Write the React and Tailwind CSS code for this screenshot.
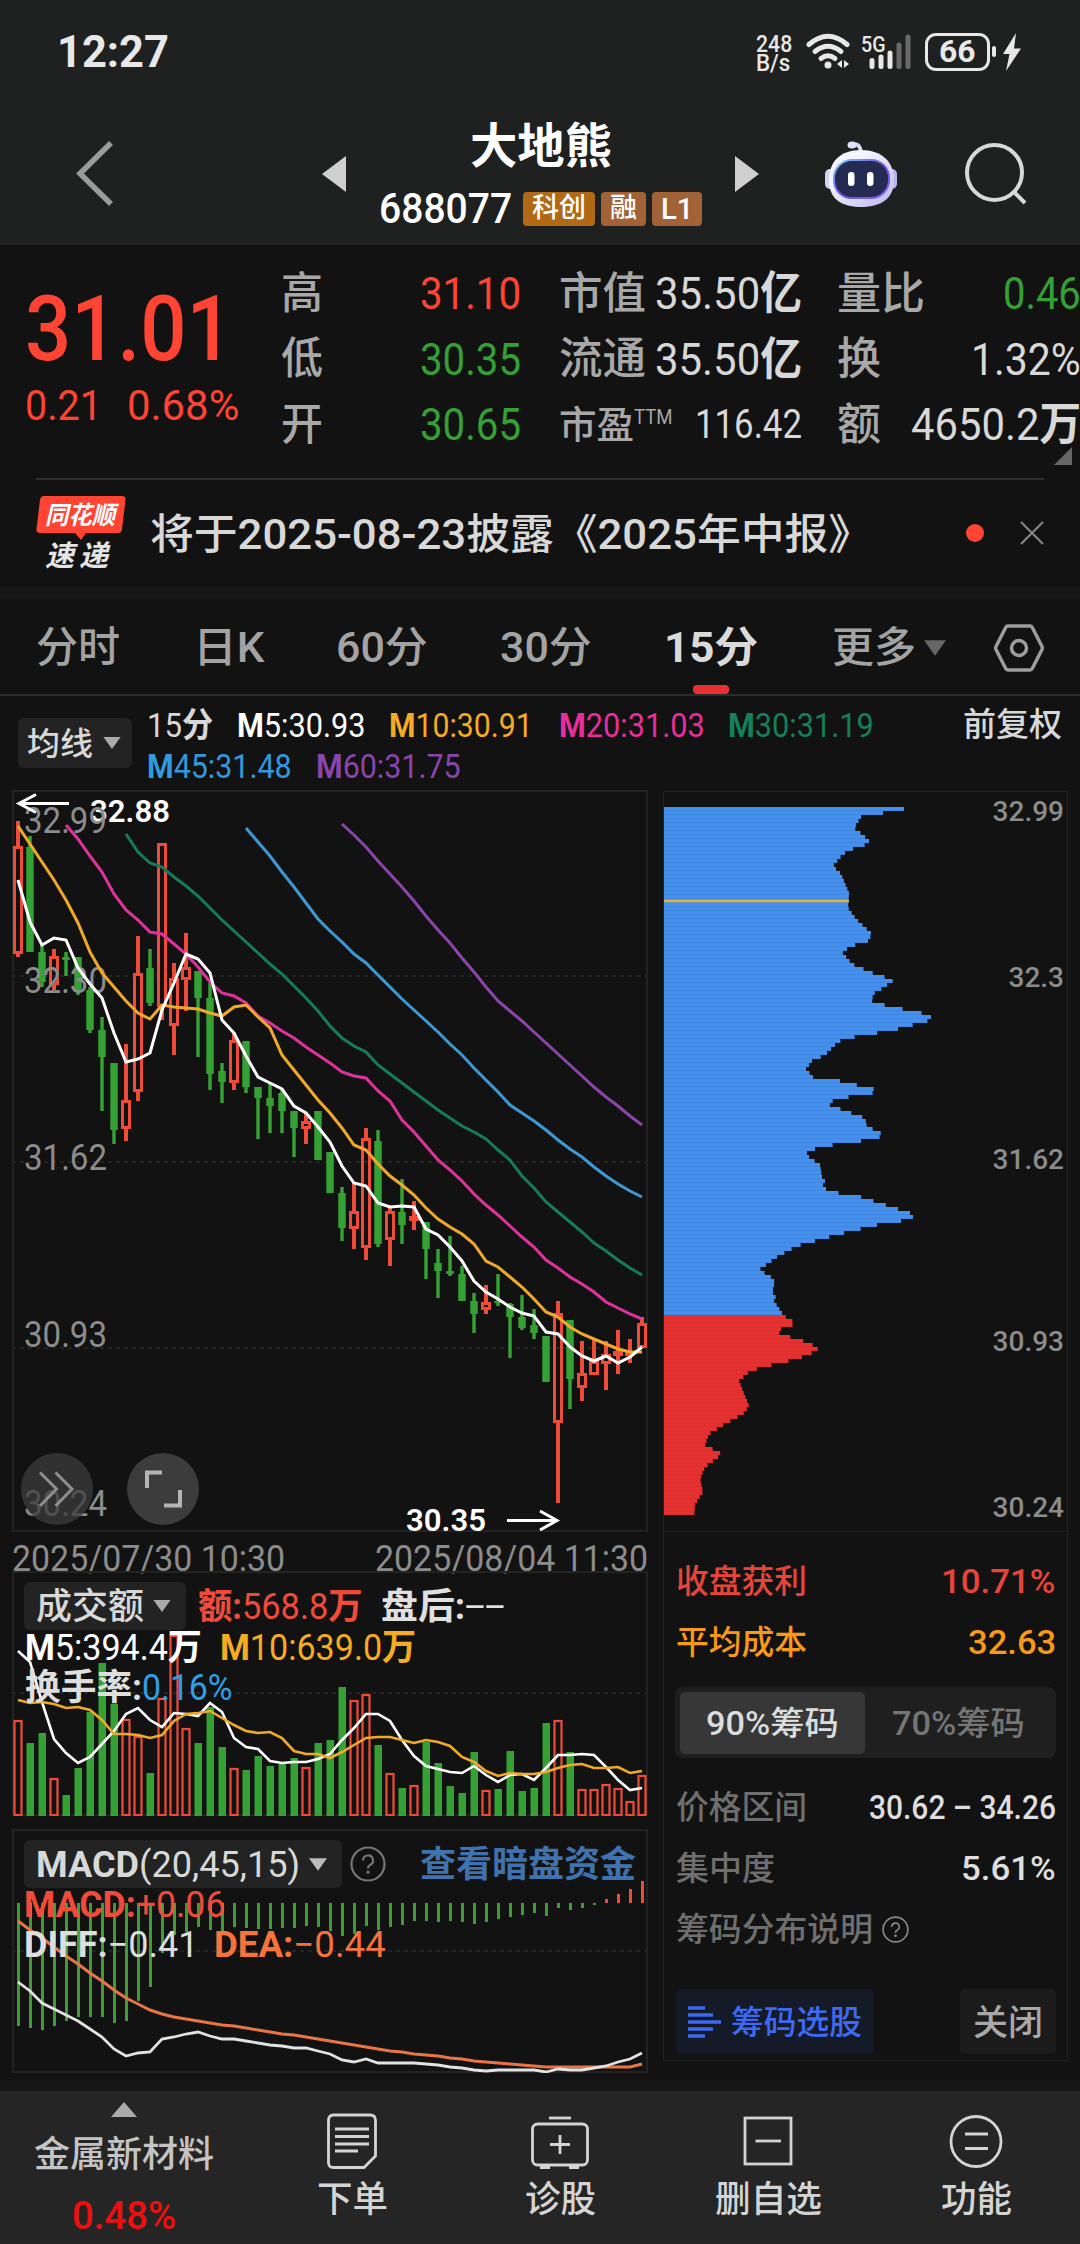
import React, { useLayoutEffect, useRef, useState } from 'react';

// [up, high, body top, body bottom, low]
const candles = [
    [1, 821, 846, 954, 957], [0, 836, 847, 952, 952], [0, 945, 952, 982, 987], [1, 949, 956, 985, 990],
    [0, 952, 957, 960, 976], [0, 957, 957, 990, 995], [0, 987, 990, 1030, 1033], [0, 1017, 1030, 1057, 1111],
    [0, 1063, 1063, 1130, 1144], [1, 1044, 1100, 1129, 1141], [1, 936, 973, 1092, 1101], [0, 949, 968, 1003, 1006],
    [1, 843, 843, 1007, 1020], [1, 963, 978, 1026, 1055], [1, 933, 967, 980, 1011], [0, 971, 971, 998, 1057],
    [0, 983, 998, 1074, 1090], [0, 1063, 1071, 1082, 1103], [1, 1032, 1040, 1083, 1090], [0, 1041, 1041, 1087, 1093],
    [0, 1087, 1087, 1098, 1139], [0, 1084, 1098, 1106, 1133], [0, 1090, 1093, 1111, 1133], [0, 1111, 1111, 1128, 1157],
    [1, 1113, 1121, 1129, 1144], [0, 1111, 1111, 1160, 1160], [0, 1152, 1152, 1193, 1193], [0, 1187, 1193, 1228, 1241],
    [1, 1183, 1211, 1229, 1249], [1, 1128, 1138, 1248, 1260], [0, 1130, 1141, 1244, 1247], [1, 1207, 1211, 1240, 1266],
    [0, 1179, 1212, 1225, 1244], [1, 1201, 1216, 1221, 1230], [0, 1222, 1222, 1249, 1279], [0, 1249, 1263, 1271, 1298],
    [0, 1236, 1271, 1274, 1276], [0, 1266, 1274, 1301, 1301], [0, 1293, 1301, 1314, 1333], [1, 1285, 1302, 1310, 1314],
    [0, 1274, 1301, 1303, 1306], [0, 1303, 1304, 1317, 1358], [0, 1295, 1317, 1328, 1330], [0, 1309, 1325, 1333, 1339],
    [0, 1336, 1336, 1382, 1382], [1, 1301, 1313, 1423, 1503], [0, 1320, 1320, 1379, 1409], [1, 1341, 1373, 1388, 1401],
    [1, 1340, 1361, 1375, 1375], [1, 1341, 1354, 1364, 1390], [1, 1330, 1351, 1356, 1374], [1, 1339, 1351, 1356, 1363],
    [1, 1317, 1323, 1348, 1348],
];

const maLines = [
    { color: '#8a45a8', start: 27, ys: [824, 835, 847, 861, 874, 887, 901, 916, 930, 943, 958, 972, 987, 1001, 1011, 1021, 1032, 1043, 1054, 1065, 1076, 1087, 1097, 1106, 1116, 1125] },
    { color: '#3e98d3', start: 19, ys: [828, 842, 856, 872, 887, 903, 919, 931, 942, 954, 963, 975, 987, 999, 1010, 1021, 1032, 1044, 1055, 1068, 1080, 1092, 1105, 1113, 1121, 1130, 1140, 1149, 1157, 1167, 1176, 1184, 1191, 1197] },
    { color: '#177a58', start: 9, ys: [834, 852, 863, 867, 877, 886, 896, 908, 920, 931, 942, 953, 964, 974, 986, 998, 1011, 1026, 1038, 1046, 1052, 1065, 1074, 1083, 1092, 1101, 1110, 1118, 1126, 1132, 1139, 1150, 1160, 1176, 1188, 1202, 1212, 1222, 1232, 1243, 1251, 1260, 1268, 1275] },
    { color: '#e0329d', start: 4, ys: [825, 839, 856, 872, 894, 910, 920, 932, 934, 944, 954, 967, 982, 993, 996, 1003, 1016, 1023, 1031, 1038, 1047, 1055, 1063, 1072, 1076, 1078, 1091, 1101, 1120, 1132, 1146, 1160, 1170, 1181, 1194, 1205, 1215, 1226, 1237, 1247, 1260, 1268, 1277, 1284, 1292, 1302, 1308, 1314, 1319] },
    { color: '#f0a92b', start: 0, ys: [826, 844, 862, 880, 900, 923, 952, 973, 987, 1001, 1013, 1019, 1005, 1007, 1008, 1009, 1013, 1016, 1007, 1005, 1017, 1028, 1055, 1070, 1085, 1100, 1113, 1128, 1145, 1150, 1164, 1176, 1185, 1195, 1208, 1219, 1227, 1234, 1244, 1261, 1267, 1277, 1287, 1299, 1312, 1317, 1327, 1334, 1339, 1344, 1349, 1352, 1352] },
    { color: '#ffffff', start: 0, ys: [880, 922, 945, 938, 940, 968, 984, 998, 1033, 1062, 1059, 1053, 1010, 983, 954, 959, 973, 1020, 1033, 1056, 1077, 1083, 1089, 1106, 1113, 1127, 1142, 1166, 1183, 1186, 1203, 1207, 1206, 1207, 1229, 1235, 1247, 1261, 1281, 1292, 1299, 1307, 1313, 1316, 1332, 1334, 1347, 1356, 1361, 1356, 1363, 1357, 1347] },
];

const volumes = [1720, 1743, 1733, 1778, 1795, 1768, 1712, 1663, 1704, 1719, 1736, 1773, 1698, 1635, 1728, 1743, 1707, 1747, 1768, 1770, 1756, 1766, 1764, 1758, 1767, 1743, 1740, 1687, 1700, 1694, 1745, 1773, 1788, 1785, 1742, 1763, 1786, 1793, 1752, 1790, 1789, 1751, 1791, 1788, 1723, 1720, 1752, 1789, 1789, 1784, 1788, 1801, 1775];
const volumeUp = [0, 3, 9, 10, 12, 13, 14, 18, 24, 28, 29, 31, 33, 39, 45, 47, 48, 49, 50, 51, 52];
const volumeM5 = [1651, 1662, 1702, 1739, 1753, 1763, 1757, 1744, 1731, 1714, 1708, 1720, 1727, 1713, 1714, 1716, 1703, 1712, 1738, 1747, 1749, 1761, 1763, 1762, 1762, 1759, 1754, 1740, 1728, 1714, 1714, 1721, 1740, 1756, 1766, 1769, 1772, 1773, 1766, 1775, 1782, 1775, 1774, 1780, 1768, 1755, 1755, 1754, 1755, 1767, 1780, 1790, 1788];
const volumeM10 = [1700, 1703, 1702, 1704, 1708, 1707, 1710, 1720, 1734, 1734, 1735, 1738, 1735, 1721, 1714, 1713, 1711, 1718, 1725, 1731, 1733, 1732, 1738, 1751, 1754, 1754, 1758, 1752, 1745, 1738, 1737, 1737, 1740, 1743, 1740, 1742, 1746, 1757, 1762, 1771, 1776, 1773, 1774, 1774, 1772, 1768, 1765, 1764, 1768, 1768, 1767, 1773, 1771];

const macd = [2026, 2028, 2030, 2026, 2021, 2017, 2017, 2017, 2023, 2021, 2001, 1987, 1953, 1935, 1932, 1927, 1930, 1931, 1927, 1928, 1929, 1929, 1928, 1928, 1926, 1927, 1931, 1936, 1934, 1926, 1930, 1927, 1925, 1921, 1921, 1922, 1921, 1922, 1924, 1922, 1919, 1917, 1915, 1913, 1916, 1908, 1910, 1908, 1905, 1899, 1894, 1889, 1881];
const diff = [1982, 1991, 2003, 2009, 2015, 2021, 2029, 2037, 2049, 2056, 2053, 2052, 2039, 2037, 2034, 2032, 2036, 2039, 2039, 2041, 2043, 2045, 2046, 2048, 2048, 2051, 2054, 2060, 2062, 2059, 2063, 2063, 2063, 2063, 2064, 2065, 2067, 2068, 2070, 2071, 2070, 2070, 2070, 2070, 2072, 2069, 2070, 2070, 2068, 2066, 2062, 2059, 2053];
const dea = [1921, 1930, 1938, 1947, 1956, 1964, 1973, 1981, 1990, 1998, 2004, 2010, 2014, 2017, 2019, 2021, 2023, 2025, 2026, 2028, 2030, 2032, 2034, 2035, 2037, 2039, 2041, 2043, 2045, 2047, 2049, 2051, 2052, 2054, 2055, 2056, 2058, 2059, 2061, 2062, 2063, 2064, 2065, 2066, 2067, 2067, 2067, 2067, 2067, 2067, 2067, 2067, 2064];

// [right edge, y] of the chip distribution
const chips = [
    [904, 807], [904, 810], [883, 812], [861, 816], [854, 827], [863, 834], [871, 842], [855, 847], [843, 853], [833, 865],
    [841, 873], [849, 892], [848, 907], [856, 918], [872, 933], [868, 940], [852, 945], [842, 951], [852, 963], [875, 973],
    [894, 979], [880, 989], [873, 993], [872, 1001], [893, 1006], [931, 1014], [931, 1019], [898, 1028], [872, 1033],
    [843, 1038], [835, 1044], [825, 1054], [812, 1060], [806, 1068], [813, 1076], [840, 1080], [882, 1090], [863, 1094],
    [834, 1098], [830, 1104], [843, 1109], [865, 1117], [867, 1126], [881, 1131], [879, 1138], [843, 1142], [817, 1147],
    [805, 1153], [820, 1164], [822, 1176], [826, 1178], [822, 1186], [832, 1191], [858, 1195], [892, 1206], [913, 1213],
    [913, 1218], [877, 1224], [840, 1233], [797, 1245], [777, 1256], [759, 1269], [770, 1275], [775, 1281], [772, 1291],
    [776, 1295], [774, 1300], [784, 1315], [794, 1321], [792, 1325], [774, 1330], [793, 1337], [810, 1342], [819, 1349],
    [797, 1358], [767, 1365], [750, 1370], [739, 1380], [749, 1405], [743, 1413], [723, 1424], [709, 1433], [705, 1444],
    [722, 1453], [705, 1466], [700, 1478], [703, 1491], [695, 1503], [694, 1516],
];

const RED = '#ee4c39';
const GREEN = '#35a033';

const xOf = (i) => 18 + i * 12;
const toPoints = (ys, start = 0) => ys.map((y, i) => `${xOf(i + start)},${y}`).join(' ');

const chipEdge = (y) => {
    const n = chips.findIndex((p) => p[1] >= y);
    if (n <= 0) return chips[0][0];
    const [x0, y0] = chips[n - 1];
    const [x1, y1] = chips[n];
    return x0 + ((x1 - x0) * (y - y0)) / (y1 - y0);
};

// Squeezes a label into the width that its class gives
const Fit = ({ className = '', children }) => {
    const outer = useRef(null);
    const inner = useRef(null);
    const [scale, setScale] = useState(1);

    useLayoutEffect(() => {
        setScale(outer.current.offsetWidth / inner.current.offsetWidth);
    }, [children]);

    return (
        <span ref={outer} className={`inline-block shrink-0 whitespace-nowrap text-left leading-none ${className}`}>
            <span ref={inner} className="inline-block origin-left" style={{ transform: `scaleX(${scale})` }}>
                {children}
            </span>
        </span>
    );
};

const Caret = ({ className = '' }) => (
    <svg viewBox="0 0 20 14" className={`shrink-0 ${className}`}>
        <path d="M0 0H20L10 14Z" fill="currentColor" />
    </svg>
);

const Help = ({ className = '' }) => (
    <svg viewBox="0 0 36 36" fill="none" stroke="currentColor" strokeWidth="2.2" className={`shrink-0 ${className}`}>
        <circle cx="18" cy="18" r="16.5" />
        <path d="M13 14.5a5 5 0 1 1 7 4.5q-2 1-2 3.5" />
        <circle cx="18" cy="26.3" r="1.1" fill="currentColor" stroke="none" />
        <circle cx="18" cy="26.3" r="0.6" />
    </svg>
);

const StatusBar = () => (
    <div className="flex h-[103px] items-center pl-[57px] text-[#e8e8e8]">
        <Fit className="w-[112px] text-[45px] font-bold">12:27</Fit>
        <div className="ml-[587px] flex w-[36px] flex-col">
            <Fit className="h-[19px] w-[36px] text-[23px]/[19px] font-medium">248</Fit>
            <Fit className="h-[19px] w-[34px] text-[23px]/[19px] font-medium">B/s</Fit>
        </div>
        <svg viewBox="806 32 46 38" className="ml-[14px] h-[38px] w-[46px]" fill="none" stroke="currentColor" strokeWidth="5" strokeLinecap="round">
            <path d="M809 43.5Q828 27 847 43.5" />
            <path d="M815 50.5Q828 40 841 50.5" />
            <path d="M821 57.5Q828 52 835 57.5" />
            <circle cx="828" cy="64" r="3.5" fill="currentColor" stroke="none" />
            <path d="M842 59v8l-5-4zM844 59v8l5-4z" fill="currentColor" stroke="none" />
        </svg>
        <div className="relative ml-[9px] h-[36px] w-[52px]">
            <Fit className="absolute top-0 left-0 w-[25px] text-[22px] font-medium">5G</Fit>
            <svg viewBox="861 33 52 36" className="h-[36px] w-[52px]" strokeWidth="5" strokeLinecap="round" stroke="#e8e8e8">
                <path d="M872 59.500v6M881 56v9.500M890 52v13.500" />
                <path d="M899 44v21.500M908 36v29.500" stroke="#6a6a6a" />
            </svg>
        </div>
        <div className="ml-[12px] flex h-[38px] w-[65px] items-center justify-center rounded-[11px] border-[3px] border-[#e8e8e8]">
            <Fit className="w-[37px] text-[31px] font-bold">66</Fit>
        </div>
        <div className="ml-[2px] h-[11px] w-[4px] rounded-full bg-[#e8e8e8]" />
        <svg viewBox="0 0 18 38" className="ml-[7px] h-[38px] w-[18px]">
            <path d="M13 0L0 21h6.500L3 38L18 15.500h-7Z" fill="currentColor" />
        </svg>
    </div>
);

const Robot = () => (
    <svg viewBox="825 134 73 72" className="ml-[66px] h-[72px] w-[73px]">
        <defs>
            <linearGradient id="shell" x1="0" y1="0" x2="1" y2="1">
                <stop offset="0.3" stopColor="#f4f5fd" />
                <stop offset="1" stopColor="#b9b5ee" />
            </linearGradient>
            <linearGradient id="rim" x1="0" y1="0" x2="1" y2="1">
                <stop offset="0" stopColor="#7fd0f5" />
                <stop offset="0.5" stopColor="#6a4fe0" />
                <stop offset="1" stopColor="#8a5cf0" />
            </linearGradient>
        </defs>
        <path d="M852 141q8-3 9 8" stroke="#d6d8f4" strokeWidth="4" fill="none" />
        <ellipse cx="852" cy="141" rx="4.500" ry="3.500" fill="#dfe1fa" />
        <rect x="825" y="165" width="10" height="20" rx="5" fill="#d5d4f5" />
        <rect x="887" y="165" width="10" height="20" rx="5" fill="#b9b4ee" />
        <path d="M861 146C882 146 894 158 894 176C894 194 882 203 861 203C840 203 829 194 829 176C829 158 840 146 861 146Z" fill="url(#shell)" />
        <rect x="834" y="156" width="55" height="38" rx="18" fill="#232b52" stroke="url(#rim)" strokeWidth="2" />
        <rect x="848" y="168" width="6.500" height="14" rx="3.200" fill="#fff" />
        <rect x="867" y="168" width="6.500" height="14" rx="3.200" fill="#fff" />
    </svg>
);

const NavBar = () => (
    <div className="flex h-[142px] items-center pl-[75px]">
        <svg viewBox="0 0 40 66" className="h-[66px] w-[40px]" fill="none" stroke="#9b9b9b" strokeWidth="5.500">
            <path d="M36 2L5 32.500L36 63" />
        </svg>
        <svg viewBox="0 0 24 36" className="ml-[207px] h-[36px] w-[24px]"><path d="M24 0V36L0 18Z" fill="#cfcfcf" /></svg>
        <div className="ml-[33px] flex w-[323px] flex-col items-center gap-[21px]">
            <Fit className="w-[142px] text-[48px] font-bold text-white">大地熊</Fit>
            <div className="flex h-[34px] w-full items-center gap-[6px] text-[27px] font-medium text-white">
                <Fit className="mr-[5px] w-[133px] text-[42px]">688077</Fit>
                <span className="flex h-[34px] w-[72px] items-center justify-center rounded-[4px] bg-[#b06a15]"><Fit className="w-[54px]">科创</Fit></span>
                <span className="flex h-[34px] w-[45px] items-center justify-center rounded-[4px] bg-[#a06236]"><Fit className="w-[27px]">融</Fit></span>
                <span className="flex h-[34px] w-[50px] items-center justify-center rounded-[4px] bg-[#a06236]"><Fit className="w-[32px] text-[30px]">L1</Fit></span>
            </div>
        </div>
        <svg viewBox="0 0 24 36" className="ml-[33px] h-[36px] w-[24px]"><path d="M0 0V36L24 18Z" fill="#cfcfcf" /></svg>
        <Robot />
        <svg viewBox="964 141 64 64" className="ml-[66px] h-[64px] w-[64px]" fill="none" stroke="#d8d8d8" strokeWidth="4">
            <circle cx="994.500" cy="171.500" r="27.500" />
            <path d="M1013 190L1025 202" />
        </svg>
    </div>
);

const Quote = () => (
    <div className="flex h-[213px] pt-[16px] text-[45px] text-[#d8d8d8]">
        <div className="w-[281px] shrink-0 pl-[25px] text-[#ff4433]">
            <Fit className="mt-[24px] w-[208px] text-[90px] font-medium">31.01</Fit>
            <div className="mt-[5px] flex gap-[25px] text-[43px]">
                <Fit className="w-[77px]">0.21</Fit>
                <Fit className="w-[112px]">0.68%</Fit>
            </div>
        </div>
        <div className="flex w-[240px] shrink-0 flex-col text-[#a8a8a8]">
            <div className="flex h-[65.500px] items-center justify-between"><Fit className="w-[42px] text-[44px] font-medium">高</Fit><Fit className="w-[101px] text-[#ff4433]">31.10</Fit></div>
            <div className="flex h-[65.500px] items-center justify-between"><Fit className="w-[42px] text-[44px] font-medium">低</Fit><Fit className="w-[101px] text-[#35a033]">30.35</Fit></div>
            <div className="flex h-[65.500px] items-center justify-between"><Fit className="w-[42px] text-[44px] font-medium">开</Fit><Fit className="w-[101px] text-[#35a033]">30.65</Fit></div>
        </div>
        <div className="ml-[38px] flex w-[243px] shrink-0 flex-col">
            <div className="flex h-[65.500px] items-center justify-between"><Fit className="w-[87px] text-[44px] font-medium text-[#a8a8a8]">市值</Fit><Fit className="w-[147px]">35.50<b>亿</b></Fit></div>
            <div className="flex h-[65.500px] items-center justify-between"><Fit className="w-[87px] text-[44px] font-medium text-[#a8a8a8]">流通</Fit><Fit className="w-[147px]">35.50<b>亿</b></Fit></div>
            <div className="flex h-[65.500px] items-center">
                <Fit className="w-[75px] text-[38px] font-medium text-[#a8a8a8]">市盈</Fit>
                <Fit className="mb-[14px] w-[39px] text-[21px] text-[#a8a8a8]">TTM</Fit>
                <Fit className="ml-auto w-[107px] text-[40px]">116.42</Fit>
            </div>
        </div>
        <div className="ml-[35px] flex w-[244px] shrink-0 flex-col">
            <div className="flex h-[65.500px] items-center justify-between"><Fit className="w-[88px] text-[44px] font-medium text-[#a8a8a8]">量比</Fit><Fit className="w-[78px] text-[#35a033]">0.46</Fit></div>
            <div className="flex h-[65.500px] items-center justify-between"><Fit className="w-[44px] text-[44px] font-medium text-[#a8a8a8]">换</Fit><Fit className="w-[110px]">1.32%</Fit></div>
            <div className="flex h-[65.500px] items-center justify-between"><Fit className="w-[44px] text-[44px] font-medium text-[#a8a8a8]">额</Fit><Fit className="w-[170px]">4650.2<b>万</b></Fit></div>
        </div>
    </div>
);

const News = () => (
    <div className="mx-[36px] flex h-[108px] items-center border-t-2 border-[#2e2e2e]">
        <div className="relative h-[74px] w-[90px]">
            <svg viewBox="0 0 90 74" className="absolute inset-0 h-full w-full">
                <path d="M8 0H86Q90 0 89.500 4L86 33Q85.500 37 82 37H50L45 44L39 37H4Q0 37 .5 33L4 4Q4.500 0 8 0Z" fill="#ff4433" />
            </svg>
            <Fit className="absolute top-[7px] left-[9px] w-[70px] text-[25px] font-bold text-white italic">同花顺</Fit>
            <div className="absolute top-[46px] left-[9px] flex gap-[5px] text-[29px] font-bold text-[#e4e4e4] italic">
                <Fit className="w-[29px]">速</Fit>
                <Fit className="w-[29px]">递</Fit>
            </div>
        </div>
        <Fit className="mt-[3px] ml-[24px] w-[722px] text-[42px] font-medium text-[#d8d8d8]">将于2025-08-23披露《2025年中报》</Fit>
        <span className="ml-auto h-[18px] w-[18px] rounded-full bg-[#ff4433]" />
        <svg viewBox="0 0 24 24" className="ml-[36px] h-[24px] w-[24px]" stroke="#858585" strokeWidth="2.200">
            <path d="M1 1L23 23M23 1L1 23" />
        </svg>
    </div>
);

const Tabs = () => (
    <div className="relative flex h-[97px] items-center border-b-2 border-[#2b2b2b] pt-[3px] pl-[36px] text-[42px] font-medium text-[#a3a3a3]">
        <Fit className="w-[84px]">分时</Fit>
        <Fit className="ml-[73px] w-[72px]">日K</Fit>
        <Fit className="ml-[71px] w-[92px]">60分</Fit>
        <Fit className="ml-[72px] w-[92px]">30分</Fit>
        <Fit className="ml-[72px] w-[94px] font-bold text-[#dadada]">15分</Fit>
        <Fit className="ml-[74px] w-[84px]">更多</Fit>
        <Caret className="ml-[8px] h-[18px] w-[22px] text-[#666]" />
        <svg viewBox="0 0 50 48" className="ml-[48px] h-[48px] w-[50px]" fill="none" stroke="#9d9d9d" strokeWidth="3.500" strokeLinejoin="round">
            <path d="M14 2H36Q37.500 2 38.300 3.500L48 22.500Q48.700 24 48 25.500L38.300 44.500Q37.500 46 36 46H14Q12.500 46 11.700 44.500L2 25.500Q1.300 24 2 22.500L11.700 3.500Q12.500 2 14 2Z" />
            <circle cx="25" cy="24" r="7.500" />
        </svg>
        <span className="absolute bottom-0 left-[693px] h-[9px] w-[36px] rounded-[4px] bg-[#e83030]" />
    </div>
);

const Legend = () => (
    <div className="flex h-[94px] items-start pr-[18px] pl-[18px]">
        <div className="mt-[22px] flex h-[50px] w-[114px] items-center rounded-[6px] bg-[#232323] pl-[9px] text-[#d8d8d8]">
            <Fit className="mt-[2px] w-[66px] text-[32px] font-medium">均线</Fit>
            <Caret className="ml-[10px] h-[12px] w-[18px] text-[#aaa]" />
        </div>
        <div className="mt-[12px] ml-[15px] flex flex-col gap-[7px] text-[34px]">
            <div className="flex">
                <Fit className="w-[66px] text-[#d8d8d8]">15<b>分</b></Fit>
                <Fit className="ml-[24px] w-[129px] text-white"><b>M</b>5:30.93</Fit>
                <Fit className="ml-[23px] w-[144px] text-[#f5ab22]"><b>M</b>10:30.91</Fit>
                <Fit className="ml-[26px] w-[146px] text-[#e62f9c]"><b>M</b>20:31.03</Fit>
                <Fit className="ml-[23px] w-[146px] text-[#15805a]"><b>M</b>30:31.19</Fit>
            </div>
            <div className="flex">
                <Fit className="w-[145px] text-[#3399dd]"><b>M</b>45:31.48</Fit>
                <Fit className="ml-[24px] w-[145px] text-[#8a45ad]"><b>M</b>60:31.75</Fit>
            </div>
        </div>
        <Fit className="mt-[12px] ml-auto w-[99px] text-[33px] font-medium text-[#d8d8d8]">前复权</Fit>
    </div>
);

const Frame = ({ y, h, dashes }) => (
    <g fill="none" stroke="#232323" strokeWidth="2">
        <rect x="13" y={y + 1} width="634" height={h - 2} />
        {dashes.map((d) => (
            <path key={d} d={`M12 ${d}H648`} strokeDasharray="4 4" />
        ))}
    </g>
);

const axis = [['32.99', 833], ['32.30', 993], ['31.62', 1170], ['30.93', 1347], ['30.24', 1516]];

const PriceChart = () => (
    <div className="relative h-[742px]">
        <svg viewBox="12 790 636 742" className="block h-[742px] w-[636px]">
            <Frame y={790} h={742} dashes={[976, 1162, 1348]} />
            <g fill="#fff" fontSize="32" fontWeight="600">
                <text x="90" y="821.5" textLength="80" lengthAdjust="spacingAndGlyphs">32.88</text>
                <text x="406" y="1530.5" textLength="80" lengthAdjust="spacingAndGlyphs">30.35</text>
            </g>
            {candles.map(([up, high, top, bottom, low], i) => (
                <g key={i} stroke={up ? RED : GREEN}>
                    {up ? (
                        <>
                            <path d={`M${xOf(i)} ${high}V${top}M${xOf(i)} ${bottom}V${low}`} strokeWidth="4" />
                            <rect x={xOf(i) - 3.5} y={top + 1.5} width="7" height={Math.max(bottom - top - 3, 1)} fill="none" strokeWidth="3" />
                        </>
                    ) : (
                        <>
                            <path d={`M${xOf(i)} ${high}V${low}`} strokeWidth="3.500" />
                            <path d={`M${xOf(i)} ${top}V${bottom}`} strokeWidth="7.500" />
                        </>
                    )}
                </g>
            ))}
            <g fill="#8c8c8c" fontSize="36">
                {axis.map(([label, y]) => (
                    <text key={label} x="24" y={y} textLength="83" lengthAdjust="spacingAndGlyphs">{label}</text>
                ))}
            </g>
            {maLines.map(({ color, start, ys }) => (
                <polyline key={color} points={toPoints(ys, start)} fill="none" stroke={color} strokeWidth="3" />
            ))}
            <g fill="none" stroke="#fff" strokeWidth="3">
                <path d="M69 803.500H19M36 794.500L19 803.500L36 812.500" />
                <path d="M507 1520.500H557M540 1511L557 1520.500L540 1530" />
            </g>
        </svg>
        <button className="absolute bottom-[7px] left-[9px] h-[72px] w-[72px] rounded-full bg-[#3c3c3c]/75">
            <svg viewBox="0 0 72 72" fill="none" stroke="#8f8f8f" strokeWidth="3">
                <path d="M19 19.500L35.500 36L19 53M34.500 19.500L51 36L34.500 53" />
            </svg>
        </button>
        <button className="absolute bottom-[7px] left-[115px] h-[72px] w-[72px] rounded-full bg-[#3c3c3c]">
            <svg viewBox="0 0 72 72" fill="none" stroke="#b5b5b5" strokeWidth="4">
                <path d="M20 35V19.500H35M37 52.500H53V37" />
            </svg>
        </button>
    </div>
);

const VolumeChart = () => (
    <div className="relative h-[245px]">
        <svg viewBox="12 1571 636 245" className="block h-[245px] w-[636px]">
            <Frame y={1571} h={245} dashes={[1693]} />
            {volumes.map((y, i) =>
                volumeUp.includes(i) ? (
                    <rect key={i} x={xOf(i) - 3.5} y={y + 1} width="7" height={1816 - y - 2} fill="none" stroke={RED} strokeWidth="2.200" />
                ) : (
                    <rect key={i} x={xOf(i) - 3.5} y={y} width="7.500" height={1816 - y} fill={GREEN} />
                )
            )}
            <polyline points={toPoints(volumeM5)} fill="none" stroke="#fff" strokeWidth="2.600" />
            <polyline points={toPoints(volumeM10)} fill="none" stroke="#f0a92b" strokeWidth="2.600" />
        </svg>
        <div className="absolute inset-0 pt-[11px] pl-[12px] text-[36px]">
            <div className="flex h-[48px] items-center">
                <div className="flex h-[48px] w-[162px] items-center rounded-[6px] bg-[#232323] pl-[12px] text-[#d8d8d8]">
                    <Fit className="mt-[2px] w-[108px] font-medium">成交额</Fit>
                    <Caret className="ml-[9px] h-[12px] w-[18px] text-[#aaa]" />
                </div>
                <Fit className="mt-[2px] ml-[12px] w-[165px] text-[#f04b3a]"><b>额:</b>568.8<b>万</b></Fit>
                <Fit className="mt-[2px] ml-[18px] w-[84px] font-bold text-[#e0e0e0]">盘后:</Fit>
                <Fit className="w-[40px] text-[#e0e0e0]">--</Fit>
            </div>
            <div className="flex pl-[1px]">
                <Fit className="w-[177px] text-white"><b>M</b>5:394.4<b>万</b></Fit>
                <Fit className="ml-[18px] w-[196px] text-[#f5ab22]"><b>M</b>10:639.0<b>万</b></Fit>
            </div>
            <div className="mt-[4px] flex pl-[1px]">
                <Fit className="w-[117px] font-bold text-[#dedede]">换手率:</Fit>
                <Fit className="w-[91px] text-[#2f9fe6]">0.16%</Fit>
            </div>
        </div>
    </div>
);

const MacdChart = () => (
    <div className="relative mt-[13px] h-[244px]">
        <svg viewBox="12 1829 636 244" className="block h-[244px] w-[636px]">
            <Frame y={1829} h={244} dashes={[1951]} />
            {macd.map((y, i) => (
                <path key={i} d={`M${xOf(i) + 0.5} 1903V${y}`} stroke={y < 1903 ? RED : '#419c38'} strokeWidth="3" />
            ))}
            <polyline points={toPoints(dea)} fill="none" stroke="#e97547" strokeWidth="3" />
            <polyline points={toPoints(diff)} fill="none" stroke="#e2e2e2" strokeWidth="2.800" />
        </svg>
        <div className="absolute inset-0 pt-[11px] pl-[12px] text-[36px]">
            <div className="flex h-[48px] items-center">
                <div className="flex h-[48px] w-[318px] items-center rounded-[6px] bg-[#232323] pl-[12px] text-[#d8d8d8]">
                    <Fit className="mt-[2px] w-[264px]"><b>MACD</b>(20,45,15)</Fit>
                    <Caret className="ml-[9px] h-[13px] w-[18px] text-[#bbb]" />
                </div>
                <Help className="ml-[8px] h-[36px] w-[36px] text-[#757575]" />
                <Fit className="mt-[2px] ml-[34px] w-[216px] font-bold text-[#4172b0]">查看暗盘资金</Fit>
            </div>
            <div className="-mt-[1px] flex">
                <Fit className="w-[201px] text-[#f04b3a]"><b>MACD:</b>+0.06</Fit>
            </div>
            <div className="mt-[4px] flex">
                <Fit className="w-[174px] text-[#dedede]"><b>DIFF:</b>−0.41</Fit>
                <Fit className="ml-[16px] w-[172px] text-[#f7733c]"><b>DEA:</b>−0.44</Fit>
            </div>
        </div>
    </div>
);

const ChipChart = () => {
    const rows = [];
    for (let y = 807; y < 1515; y += 4) {
        rows.push(y);
    }

    return (
        <svg viewBox="663 791 405 741" className="block h-[741px] w-[405px]">
            {rows.map((y) => {
                const edge = chipEdge(y + 1);
                return (
                    <g key={y}>
                        <rect x="664" y={y} width={edge - 664} height="4" fill={y < 1314 ? '#4590ec' : '#e73030'} />
                        <rect x="664" y={y + 3} width={edge - 664} height="1" fill={y < 1314 ? '#3e86df' : '#dc2d2d'} />
                    </g>
                );
            })}
            <path d="M664 901H849" stroke="#e8b13a" strokeWidth="2.500" />
            <path d="M663.500 1532V791.500H1067.500V1532M663 1531.500H1068" fill="none" stroke="#232323" />
            <g fill="#8c8c8c" fontSize="28" fontWeight="500" textAnchor="end">
                <text x="1064" y="821">32.99</text>
                <text x="1064" y="987">32.3</text>
                <text x="1064" y="1169">31.62</text>
                <text x="1064" y="1351">30.93</text>
                <text x="1064" y="1517">30.24</text>
            </g>
        </svg>
    );
};

const ChipPanel = () => (
    <div className="w-[405px]">
        <ChipChart />
        <div className="flex h-[529px] flex-col border border-t-0 border-[#232323] pr-[11px] pl-[12px] text-[33px] font-medium">
            <div className="mt-[19px] flex h-[61px] items-center justify-between text-[#e8443a]">
                <Fit className="w-[131px]">收盘获利</Fit>
                <Fit className="w-[115px]">10.71%</Fit>
            </div>
            <div className="flex h-[61px] items-center justify-between text-[#f79a17]">
                <Fit className="w-[131px]">平均成本</Fit>
                <Fit className="w-[88px]">32.63</Fit>
            </div>
            <div className="mt-[14px] -ml-[1px] flex h-[71px] items-center rounded-[8px] bg-[#1f1f1f] p-[5px]">
                <button className="flex h-[62px] w-[185px] items-center justify-center rounded-[5px] bg-[#373737] pt-[2px] text-[#dcdcdc]"><Fit className="w-[133px]">90%筹码</Fit></button>
                <button className="flex h-[62px] flex-1 items-center justify-center pt-[2px] text-[#757575]"><Fit className="w-[133px]">70%筹码</Fit></button>
            </div>
            <div className="mt-[18px] flex h-[62px] items-center justify-between text-[#6f6f6f]">
                <Fit className="w-[131px]">价格区间</Fit>
                <Fit className="w-[187px] text-[#dedede]">30.62 – 34.26</Fit>
            </div>
            <div className="flex h-[61px] items-center justify-between text-[#6f6f6f]">
                <Fit className="w-[99px]">集中度</Fit>
                <Fit className="w-[95px] text-[#dedede]">5.61%</Fit>
            </div>
            <div className="flex h-[61px] items-center text-[#6f6f6f]">
                <Fit className="w-[197px]">筹码分布说明</Fit>
                <Help className="ml-[9px] h-[27px] w-[27px] text-[#8a8a8a]" />
            </div>
            <div className="mt-[29px] flex h-[65px] items-center justify-between">
                <button className="flex h-[65px] w-[198px] items-center rounded-[5px] bg-[#151a29] pl-[12px] text-[#3d6af0]">
                    <svg viewBox="0 0 33 32" className="h-[32px] w-[33px]" stroke="currentColor" strokeWidth="3.500">
                        <path d="M0 2H17M0 9H25M0 16H33M0 23H25M0 30H17" />
                    </svg>
                    <Fit className="mt-[2px] ml-[10px] w-[131px]">筹码选股</Fit>
                </button>
                <button className="flex h-[65px] w-[96px] items-center justify-center rounded-[5px] bg-[#1b1b1b] pt-[3px] text-[#a8a8a8]"><Fit className="w-[70px] text-[35px]">关闭</Fit></button>
            </div>
        </div>
    </div>
);

const BottomBar = () => (
    <div className="flex h-[153px] bg-[#252525] text-[36px] font-medium text-[#d4d4d4]">
        <div className="flex w-[248px] flex-col items-center pt-[11px]">
            <svg viewBox="0 0 26 15" className="h-[15px] w-[26px]"><path d="M13 0L26 15H0Z" fill="#aaa" /></svg>
            <Fit className="mt-[20px] w-[180px] text-[#c4c4c4]">金属新材料</Fit>
            <Fit className="mt-[24px] w-[104px] text-[38px] text-[#ee0f0f]">0.48%</Fit>
        </div>
        <div className="flex w-[208px] flex-col items-center pt-[22px]">
            <svg viewBox="0 0 50 56" className="h-[56px] w-[50px]" fill="none" stroke="currentColor" strokeWidth="2.800">
                <path d="M6.500 2H43Q48.500 2 48.500 7.500V43L37 54.500H6.500Q1.500 54.500 1.500 49.500V7.500Q1.500 2 6.500 2Z" />
                <path d="M8 16H42M8 23.500H42M8 31H42M8 38H31" />
            </svg>
            <Fit className="mt-[13px] w-[71px]">下单</Fit>
        </div>
        <div className="flex w-[208px] flex-col items-center pt-[22px]">
            <svg viewBox="0 0 58 56" className="h-[56px] w-[58px]" fill="none" stroke="currentColor" strokeWidth="2.800">
                <path d="M18 5H40" />
                <rect x="1.500" y="11" width="55" height="41" rx="5" />
                <path d="M29 22V41M19 31.500H39" />
                <path d="M9 54H19M38 54H48" strokeWidth="4" />
            </svg>
            <Fit className="mt-[13px] w-[71px]">诊股</Fit>
        </div>
        <div className="flex w-[208px] flex-col items-center pt-[22px]">
            <svg viewBox="0 0 50 56" className="h-[56px] w-[50px]" fill="none" stroke="currentColor" strokeWidth="2.800">
                <rect x="2" y="5" width="46" height="46" />
                <path d="M12.500 28H38" />
            </svg>
            <Fit className="mt-[13px] w-[107px]">删自选</Fit>
        </div>
        <div className="flex w-[208px] flex-col items-center pt-[22px]">
            <svg viewBox="0 0 54 56" className="h-[56px] w-[54px]" fill="none" stroke="currentColor" strokeWidth="2.800">
                <circle cx="27" cy="28.500" r="25" />
                <path d="M16 21H39M16 35.500H39" />
            </svg>
            <Fit className="mt-[13px] w-[71px]">功能</Fit>
        </div>
    </div>
);

const App = () => {
    return (
        <div className="flex h-[2244px] w-[1080px] flex-col overflow-hidden bg-[#121212] font-['Roboto','Noto_Sans_CJK_SC',sans-serif]">
            <header className="h-[245px] shrink-0 bg-[#1f2120]">
                <StatusBar />
                <NavBar />
            </header>
            <section className="relative h-[342px] shrink-0">
                <Quote />
                <svg viewBox="0 0 18 18" className="absolute top-[202px] right-[8px] h-[18px] w-[18px]"><path d="M18 0V18H0Z" fill="#666" /></svg>
                <div className="mt-[20px]">
                    <News />
                </div>
            </section>
            <div className="h-[12px] shrink-0 bg-[#171717]" />
            <Tabs />
            <Legend />
            <main className="flex h-[1290px] shrink-0 pl-[12px]">
                <div className="w-[636px]">
                    <PriceChart />
                    <div className="flex h-[39px] items-center justify-between pt-[15px] text-[36px] text-[#8c8c8c]">
                        <Fit className="w-[273px]">2025/07/30 10:30</Fit>
                        <Fit className="w-[273px]">2025/08/04 11:30</Fit>
                    </div>
                    <VolumeChart />
                    <MacdChart />
                </div>
                <div className="ml-[15px] pt-[1px]">
                    <ChipPanel />
                </div>
            </main>
            <div className="h-[11px] shrink-0 bg-[#171717]" />
            <BottomBar />
        </div>
    );
};

export default App;
